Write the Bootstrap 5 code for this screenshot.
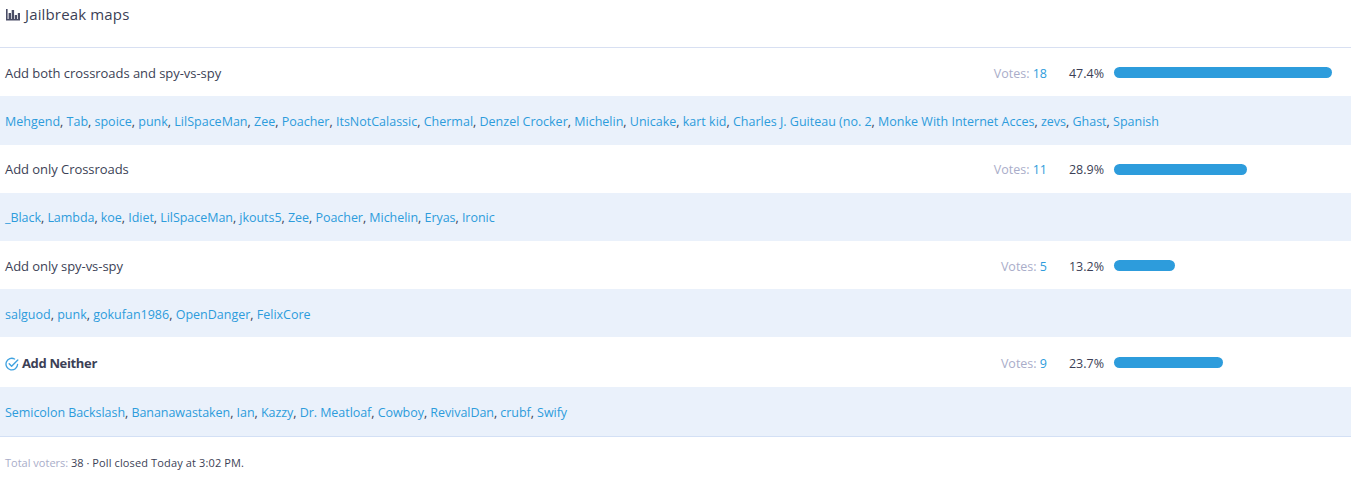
<!DOCTYPE html>
<html lang="en">
<head>
<meta charset="utf-8">
<title>Jailbreak maps</title>
<link rel="stylesheet" href="https://cdn.jsdelivr.net/npm/bootstrap@5.3.0/dist/css/bootstrap.min.css">
<style>
body { font-family: "Open Sans", "Noto Sans", sans-serif; font-size: 13px; color: #3c3f56; background: #fff; }
a { color: #2d9cdc; text-decoration: none; }
.poll-head { height: 48px; padding: 5px 5px 0; border-bottom: 1px solid #d8e0f2; font-size: 15px; line-height: 20px; letter-spacing: .15px; }
.head-title { margin-top: -1px; }
.poll-row { height: 48px; padding: 0 19px 0 5px; }
.poll-row.tall { height: 50px; }
.row-label { padding-top: 4px; letter-spacing: -.05px; }
.row-label.up { padding-top: 2px; }
.poll-voters { height: 48px; padding: 3px 5px 0; background: #eaf1fb; font-size: 12.5px; }
.poll-voters.first { height: 49px; }
.poll-voters.low { padding-top: 5px; }
.poll-voters.snug { letter-spacing: -.04px; }
.poll-voters.tall { height: 50px; border-bottom: 1px solid #d3e0f5; letter-spacing: -.05px; }
.vote-count { color: #a9adc9; padding-top: 5px; font-size: 12.5px; }
.vote-pct { width: 57px; text-align: right; margin-right: 10px; padding-top: 5px; font-size: 12.5px; }
.row-up .vote-count, .row-up .vote-pct { padding-top: 3px; }
.bar-track { width: 218px; height: 11px; }
.bar-fill { height: 100%; background: #2d9cdc; border-radius: 6px; }
.poll-foot { padding: 18px 5px 0; font-size: 11px; line-height: 16px; }
.foot-label { color: #a9adc9; }
.foot-rest { letter-spacing: .13px; }
.label-strong { letter-spacing: -.35px; font-weight: 700; }
.check-gap { gap: 3px; }
</style>
</head>
<body>
<div class="poll-head d-flex align-items-start gap-1">
  <svg width="16" height="20" viewBox="0 0 16 20" aria-hidden="true"><path fill="#4a4d66" d="M1 4h1.6v10H15v1.6H1zM3.6 8h2.4v6H3.6zM6.7 5h2.4v9H6.7zM9.8 10h2.2v4H9.8zM12.8 8H15v6h-2.2z"/></svg>
  <span class="head-title">Jailbreak maps</span>
</div>

<div class="poll-row d-flex align-items-center">
  <div class="flex-grow-1 row-label">Add both crossroads and spy-vs-spy</div>
  <div class="vote-count">Votes: <a href="#">18</a></div>
  <div class="vote-pct">47.4%</div>
  <div class="bar-track"><div class="bar-fill" style="width:218px"></div></div>
</div>
<div class="poll-voters first d-flex align-items-center"><div><a href="#">Mehgend</a>, <a href="#">Tab</a>, <a href="#">spoice</a>, <a href="#">punk</a>, <a href="#">LilSpaceMan</a>, <a href="#">Zee</a>, <a href="#">Poacher</a>, <a href="#">ItsNotCalassic</a>, <a href="#">Chermal</a>, <a href="#">Denzel Crocker</a>, <a href="#">Michelin</a>, <a href="#">Unicake</a>, <a href="#">kart kid</a>, <a href="#">Charles J. Guiteau (no. 2</a>, <a href="#">Monke With Internet Acces</a>, <a href="#">zevs</a>, <a href="#">Ghast</a>, <a href="#">Spanish</a></div></div>

<div class="poll-row row-up d-flex align-items-center">
  <div class="flex-grow-1 row-label up">Add only Crossroads</div>
  <div class="vote-count">Votes: <a href="#">11</a></div>
  <div class="vote-pct">28.9%</div>
  <div class="bar-track"><div class="bar-fill" style="width:133px"></div></div>
</div>
<div class="poll-voters snug d-flex align-items-center"><div><a href="#">_Black</a>, <a href="#">Lambda</a>, <a href="#">koe</a>, <a href="#">Idiet</a>, <a href="#">LilSpaceMan</a>, <a href="#">jkouts5</a>, <a href="#">Zee</a>, <a href="#">Poacher</a>, <a href="#">Michelin</a>, <a href="#">Eryas</a>, <a href="#">Ironic</a></div></div>

<div class="poll-row d-flex align-items-center">
  <div class="flex-grow-1 row-label">Add only spy-vs-spy</div>
  <div class="vote-count">Votes: <a href="#">5</a></div>
  <div class="vote-pct">13.2%</div>
  <div class="bar-track"><div class="bar-fill" style="width:61px"></div></div>
</div>
<div class="poll-voters low d-flex align-items-center"><div><a href="#">salguod</a>, <a href="#">punk</a>, <a href="#">gokufan1986</a>, <a href="#">OpenDanger</a>, <a href="#">FelixCore</a></div></div>

<div class="poll-row tall d-flex align-items-center">
  <div class="flex-grow-1 d-flex align-items-center check-gap row-label">
    <svg width="14" height="14" viewBox="0 0 14 14" aria-hidden="true"><path fill="none" stroke="#3fa2e0" stroke-width="1.3" stroke-linecap="round" d="M12.6 7.4A5.8 5.8 0 1 1 9.6 2"/><path fill="none" stroke="#3fa2e0" stroke-width="1.4" stroke-linecap="round" stroke-linejoin="round" d="M4.2 6.8 6.6 9.2 12.8 3"/></svg>
    <span class="label-strong">Add Neither</span>
  </div>
  <div class="vote-count">Votes: <a href="#">9</a></div>
  <div class="vote-pct">23.7%</div>
  <div class="bar-track"><div class="bar-fill" style="width:109px"></div></div>
</div>
<div class="poll-voters tall d-flex align-items-center"><div><a href="#">Semicolon Backslash</a>, <a href="#">Bananawastaken</a>, <a href="#">Ian</a>, <a href="#">Kazzy</a>, <a href="#">Dr. Meatloaf</a>, <a href="#">Cowboy</a>, <a href="#">RevivalDan</a>, <a href="#">crubf</a>, <a href="#">Swify</a></div></div>

<div class="poll-foot"><span class="foot-label">Total voters:</span> 38 · <span class="foot-rest">Poll closed Today at 3:02 PM.</span></div>
</body>
</html>
